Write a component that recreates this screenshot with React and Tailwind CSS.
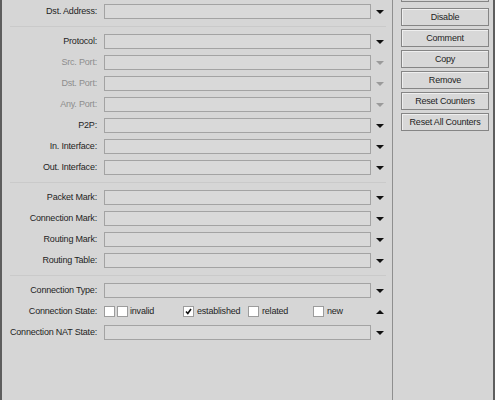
import React from 'react';

const Arrow = ({ up = false, disabled = false }) => (
  <svg width="8" height="4" viewBox="0 0 8 4" className="block">
    <path
      d={up ? 'M4 0 L8 4 L0 4 Z' : 'M0 0 L8 0 L4 4 Z'}
      fill={disabled ? '#9a9a9a' : '#111'}
    />
  </svg>
);

const Row = ({ label, disabled = false }) => (
  <div className="flex h-[21px] items-center">
    <div
      className={`flex w-[96px] justify-end whitespace-nowrap pr-[1px] ${disabled ? 'text-[#8d8d8d]' : 'text-[#1e1e1e]'}`}
    >
      {label}:
    </div>
    <div className="ml-[6px] h-[15px] w-[267px] border border-[#a3a3a3] bg-[#d9d9d9]" />
    <div className="ml-[4px] flex w-[9px] justify-center">
      <Arrow disabled={disabled} />
    </div>
  </div>
);

const Sep = () => <div className="my-[4px] ml-[8px] h-px w-[376px] bg-[#cacaca]" />;

const Check = ({ checked = false }) => (
  <span className="flex h-[11px] w-[11px] shrink-0 items-center justify-center border border-[#9c9c9c] bg-white">
    {checked && (
      <svg width="7" height="7" viewBox="0 0 7 7">
        <path d="M1 3.5 L2.8 5.5 L6 1" fill="none" stroke="#111" strokeWidth="1.6" />
      </svg>
    )}
  </span>
);

const Btn = ({ children }) => (
  <div className="flex h-[18px] w-[88px] items-center justify-center whitespace-nowrap border border-[#858585] bg-[#d8d8d8] text-[#1e1e1e] shadow-[inset_1px_1px_0_#efefef]">
    {children}
  </div>
);

export default function App() {
  return (
    <div
      className="flex h-[400px] w-[495px] overflow-hidden bg-[#d6d6d6] text-[9px] leading-none tracking-[-0.2px]"
      style={{ fontFamily: '"Liberation Sans", Arial, sans-serif' }}
    >
      <div className="w-[2px] bg-[#5e5e5e]" />
      {/* form */}
      <div className="w-[390px] pt-[1px]">
        <Row label="Dst. Address" />
        <Sep />
        <Row label="Protocol" />
        <Row label="Src. Port" disabled />
        <Row label="Dst. Port" disabled />
        <Row label="Any. Port" disabled />
        <Row label="P2P" />
        <Row label="In. Interface" />
        <Row label="Out. Interface" />
        <Sep />
        <Row label="Packet Mark" />
        <Row label="Connection Mark" />
        <Row label="Routing Mark" />
        <Row label="Routing Table" />
        <Sep />
        <Row label="Connection Type" />
        <div className="flex h-[21px] items-center">
          <div className="flex w-[96px] justify-end whitespace-nowrap pr-[1px] text-[#1e1e1e]">Connection State:</div>
          <div className="ml-[6px] flex w-[267px] items-center text-[#1e1e1e]">
            <Check />
            <span className="ml-[2px]"><Check /></span>
            <span className="ml-[2px] w-[53px]">invalid</span>
            <Check checked />
            <span className="ml-[3px] w-[51px]">established</span>
            <Check />
            <span className="ml-[3px] w-[51px]">related</span>
            <Check />
            <span className="ml-[3px]">new</span>
          </div>
          <div className="ml-[4px] flex w-[9px] justify-center">
            <Arrow up />
          </div>
        </div>
        <Row label="Connection NAT State" />
      </div>
      {/* divider */}
      <div className="w-px bg-[#8f8f8f]" />
      {/* buttons */}
      <div className="flex flex-1 flex-col items-start pl-[8px]">
        <div className="h-[2px] w-[88px] border-x border-b border-[#858585]" />
        <div className="mt-[6px] flex flex-col gap-[3px]">
          <Btn>Disable</Btn>
          <Btn>Comment</Btn>
          <Btn>Copy</Btn>
          <Btn>Remove</Btn>
          <Btn>Reset Counters</Btn>
          <Btn>Reset All Counters</Btn>
        </div>
      </div>
      <div className="w-[2px] bg-[#5e5e5e]" />
    </div>
  );
}
